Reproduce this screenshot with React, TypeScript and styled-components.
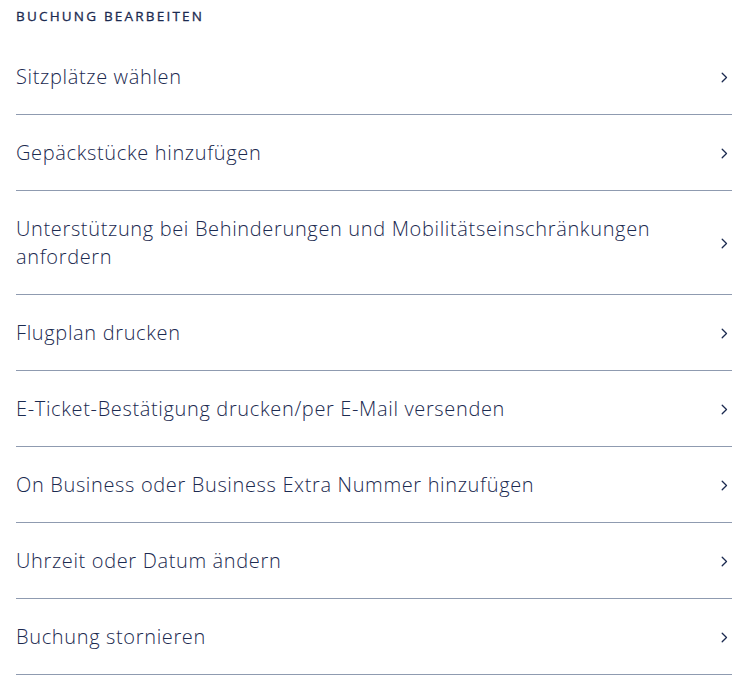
import React from "react";
import styled, { createGlobalStyle } from "styled-components";

const Global = createGlobalStyle`
  html, body { margin: 0; padding: 0; background: #ffffff; }
  body { font-family: "Open Sans", "Noto Sans", sans-serif; color: #1b2a50; }
`;

const Page = styled.div`
  padding: 6px 18px 0 16px;
  box-sizing: border-box;
  width: 750px;
`;

const Heading = styled.h2`
  margin: 0 0 13px;
  font-size: 13.5px;
  line-height: 20px;
  font-weight: 400;
  letter-spacing: 2.2px;
  text-transform: uppercase;
  color: #1b2a50;
  -webkit-text-stroke: 0.3px #1b2a50;
`;

const List = styled.ul`
  list-style: none;
  margin: 0;
  padding: 0;
`;

const Row = styled.li`
  display: flex;
  align-items: center;
  justify-content: space-between;
  gap: 40px;
  padding: 24px 0 23px;
  border-bottom: 1px solid #8f9bb0;
  cursor: pointer;
`;

const Label = styled.span`
  font-size: 20px;
  line-height: 28px;
  font-weight: 300;
  letter-spacing: 0.65px;
  color: #1b2a50;
  max-width: 660px;
`;

const Chevron = styled.svg`
  flex: none;
  width: 7px;
  height: 11px;
  margin-right: 4px;
`;

const items = [
  "Sitzplätze wählen",
  "Gepäckstücke hinzufügen",
  "Unterstützung bei Behinderungen und Mobilitätseinschränkungen anfordern",
  "Flugplan drucken",
  "E-Ticket-Bestätigung drucken/per E-Mail versenden",
  "On Business oder Business Extra Nummer hinzufügen",
  "Uhrzeit oder Datum ändern",
  "Buchung stornieren",
];

export default function App() {
  return (
    <>
      <Global />
      <Page>
        <Heading>Buchung bearbeiten</Heading>
        <List>
          {items.map((t) => (
            <Row key={t}>
              <Label>{t}</Label>
              <Chevron viewBox="0 0 7 11" aria-hidden>
                <path d="M1.2 1.2l4.3 4.3L1.2 9.8" fill="none" stroke="#1b2a50" strokeWidth="1.3" strokeLinecap="round" strokeLinejoin="round" />
              </Chevron>
            </Row>
          ))}
        </List>
      </Page>
    </>
  );
}
